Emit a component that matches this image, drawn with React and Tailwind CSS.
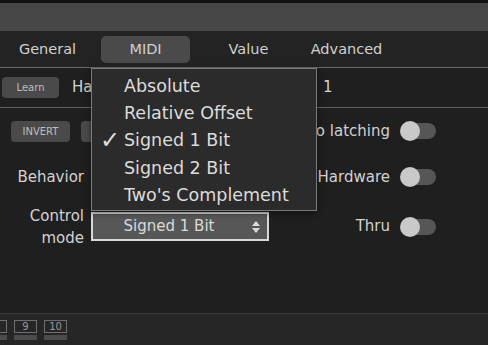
import React from "react";

const Toggle = () => (
  <div className="relative w-[36px] h-[20px] flex items-center">
    <div className="absolute left-[4px] right-0 h-[16px] rounded-full bg-[#565656]" />
    <div className="absolute left-0 w-[20px] h-[20px] rounded-full bg-[#c9c9c9]" />
  </div>
);

const SmallButton = ({ label, className = "" }) => (
  <div
    className={`h-[21px] rounded-[4px] bg-[#4a4a4a] flex items-center justify-center text-[10px] text-[#bdbdbd] ${className}`}
  >
    {label}
  </div>
);

const ToggleRow = ({ label }) => (
  <div className="flex items-center gap-[10px]">
    <span className="text-[15px] text-[#d2d2d2]">{label}</span>
    <Toggle />
  </div>
);

const PageBox = ({ n, className = "" }) => (
  <div className={`flex flex-col gap-[2px] w-[23px] ${className}`}>
    <div className="h-[13px] border border-[#6e6e6e] flex items-center justify-center text-[10px] leading-none text-[#9a9a9a]">
      {n}
    </div>
    <div className="h-[5px] bg-[#4b4b4b]" />
  </div>
);

const items = ["Absolute", "Relative Offset", "Signed 1 Bit", "Signed 2 Bit", "Two's Complement"];

export default function App() {
  return (
    <div
      className="relative w-[488px] h-[345px] overflow-hidden flex flex-col bg-[#1f1f1f] text-[#d2d2d2]"
      style={{ fontFamily: "'DejaVu Sans', Verdana, sans-serif" }}
    >
      <div className="h-[3px] bg-[#121212]" />
      <div className="h-[28px] bg-[#474747]" />

      {/* tabs */}
      <div className="h-[36px] bg-[#232323] flex items-center text-[14.5px] text-[#d0d0d0]">
        <div className="ml-[3px] w-[89px] text-center pt-[2px]">General</div>
        <div className="ml-[9px] w-[89px] h-[27px] rounded-[5px] bg-[#4a4a4a] flex items-center justify-center pt-[2px]">
          MIDI
        </div>
        <div className="ml-[14px] w-[89px] text-center pt-[2px]">Value</div>
        <div className="ml-[9px] w-[89px] text-center pt-[2px]">Advanced</div>
      </div>
      <div className="h-px bg-[#6a6a6a]" />

      {/* learn row */}
      <div className="h-[39px] flex items-center">
        <SmallButton label="Learn" className="ml-[2px] w-[57px] h-[20px]" />
        <span className="ml-[13px] w-[19px] text-[15px]">Ha</span>
        <span className="ml-[232px] text-[15px]">1</span>
      </div>
      <div className="h-px bg-[#5e5e5e]" />

      {/* option rows */}
      <div className="h-[46px] flex items-center justify-between pr-[52px]">
        <div className="flex items-center">
          <SmallButton label="INVERT" className="ml-[11px] w-[59px]" />
          <div className="ml-[11px] w-[10px] h-[21px] rounded-l-[4px] bg-[#4a4a4a]" />
        </div>
        <ToggleRow label="o latching" />
      </div>

      <div className="h-[46px] flex items-center justify-between pr-[52px]">
        <div className="flex items-center">
          <span className="w-[84px] text-right text-[15px]">Behavior</span>
          <div className="ml-[7px] w-[178px] h-[29px] border border-[#8a8a8a] bg-[#3a3a3a]" />
        </div>
        <ToggleRow label="Hardware" />
      </div>

      <div className="h-[53px] flex items-center justify-between pr-[52px]">
        <div className="flex items-center">
          <span className="w-[84px] text-right text-[15px] leading-[22px]">
            Control
            <br />
            mode
          </span>
          <div className="ml-[7px] w-[178px] h-[29px] border-2 border-[#d8d8d8] bg-[#575757] flex items-center">
            <span className="flex-1 text-center text-[15px] text-[#dadada] pr-[6px]">Signed 1 Bit</span>
            <svg width="10" height="14" viewBox="0 0 10 14" className="mr-[6px]">
              <path d="M5 1 L9 6 H1 Z" fill="#dadada" />
              <path d="M5 13 L9 8 H1 Z" fill="#dadada" />
            </svg>
          </div>
        </div>
        <ToggleRow label="Thru" />
      </div>

      <div className="flex-1" />

      {/* footer */}
      <div className="h-[32px] border-t border-[#3a3a3a] bg-[#262626] flex items-start pt-[6px]">
        <PageBox n="" className="ml-[-16px]" />
        <PageBox n="9" className="ml-[7px]" />
        <PageBox n="10" className="ml-[7px]" />
      </div>

      {/* dropdown menu */}
      <div className="absolute left-[91px] top-[68px] w-[226px] h-[143px] bg-[#2b2b2b] border border-[#7a7a7a] pt-[3px] shadow-[0_2px_6px_rgba(0,0,0,0.5)]">
        {items.map((it) => (
          <div key={it} className="h-[27.4px] flex items-center text-[17.5px] text-[#dcdcdc]">
            <span className="w-[32px] pl-[8px] text-[24px] font-bold leading-none">
              {it === "Signed 1 Bit" ? "✓" : ""}
            </span>
            {it}
          </div>
        ))}
      </div>
    </div>
  );
}
